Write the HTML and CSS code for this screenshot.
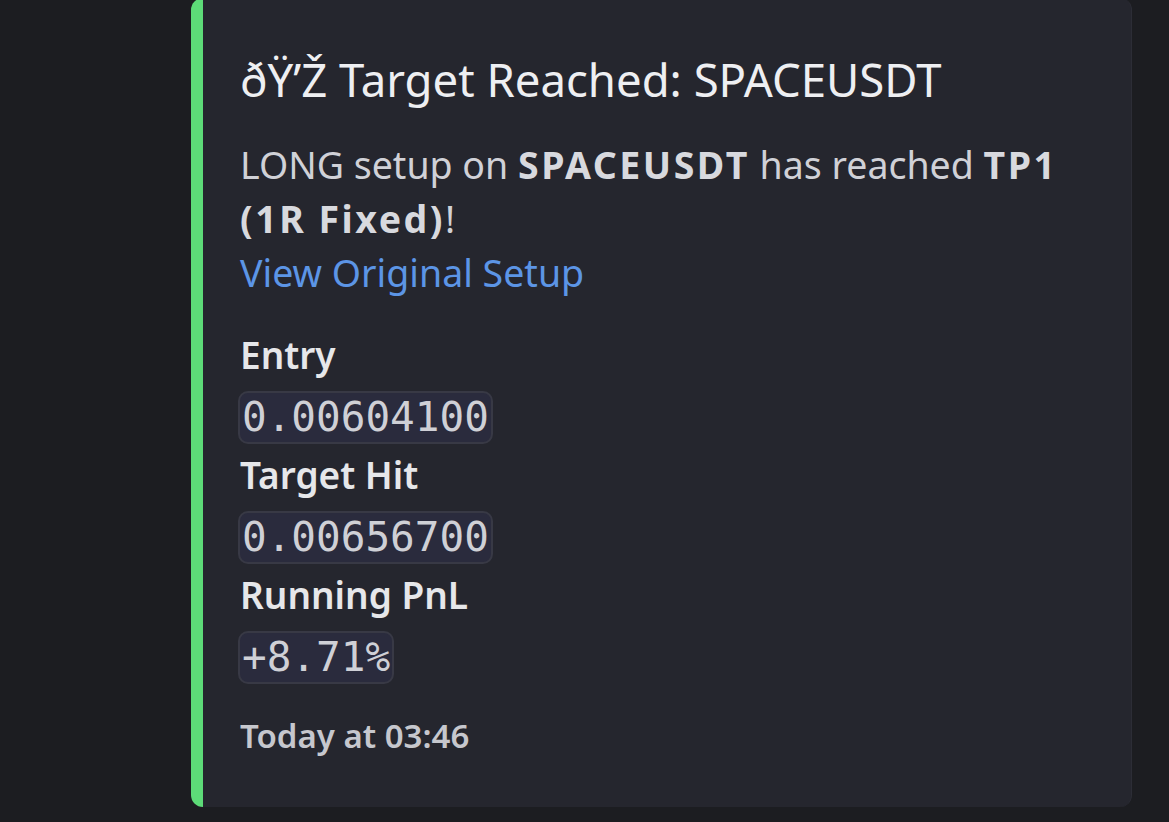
FILE: index.html
```html
<!DOCTYPE html>
<html>
<head>
<meta charset="utf-8">
<link rel="stylesheet" href="styles.css">
</head>
<body>
<div class="embed">
  <div class="content">
    <div class="title">ðŸ’Ž Target Reached: SPACEUSDT</div>
    <div class="desc">LONG setup on <b>SPACEUSDT</b> has reached <b>TP1 (1R Fixed)</b>!<br><a class="link">View Original Setup</a></div>
    <div class="fields">
      <div class="field">
        <div class="fname">Entry</div>
        <div class="fval"><code>0.00604100</code></div>
      </div>
      <div class="field">
        <div class="fname">Target Hit</div>
        <div class="fval"><code>0.00656700</code></div>
      </div>
      <div class="field">
        <div class="fname">Running PnL</div>
        <div class="fval"><code>+8.71%</code></div>
      </div>
    </div>
    <div class="footer">Today at 03:46</div>
  </div>
</div>
</body>
</html>
```

FILE: styles.css
```css
html, body {
  margin: 0;
  padding: 0;
  background: #1c1d21;
  height: 100%;
  overflow: hidden;
}
body {
  font-family: "Noto Sans", "Open Sans", sans-serif;
}
.embed {
  margin-left: 191px;
  margin-top: -2px;
  width: 941px;
  height: 809px;
  background: #25262e;
  border-left: 12px solid #5ddb78;
  border-right: 1px solid #2c2d36;
  border-radius: 12px;
  box-sizing: border-box;
}
.content {
  padding: 54px 37px 0 37px;
  display: flex;
  flex-direction: column;
}
.title {
  color: #eeeff2;
  font-size: 45.5px;
  line-height: 54px;
  font-weight: 400;
  white-space: nowrap;
}
.desc {
  margin-top: 32px;
  color: #d0d1d7;
  font-size: 37.5px;
  line-height: 54px;
}
.desc b {
  font-weight: 700;
  color: #d8d9de;
  letter-spacing: 2.5px;
}
.link {
  color: #5c95e6;
}
.fields {
  margin-top: 30px;
  display: flex;
  flex-direction: column;
}
.fname {
  color: #e6e7ea;
  font-size: 37px;
  font-weight: 600;
  line-height: 50px;
}
.fval {
  padding: 11px 0 6px;
  display: flex;
  align-items: flex-start;
}
code {
  font-family: "DejaVu Sans Mono", monospace;
  font-size: 41px;
  color: #cfd0d6;
  background: #2a2b3d;
  border: 2px solid #383945;
  border-radius: 10px;
  line-height: 49px;
  padding: 0 2px;
  margin-left: -2px;
}
.footer {
  margin-top: 26px;
  color: #c6c7cd;
  font-size: 33px;
  font-weight: 600;
  line-height: 40px;
}
```
